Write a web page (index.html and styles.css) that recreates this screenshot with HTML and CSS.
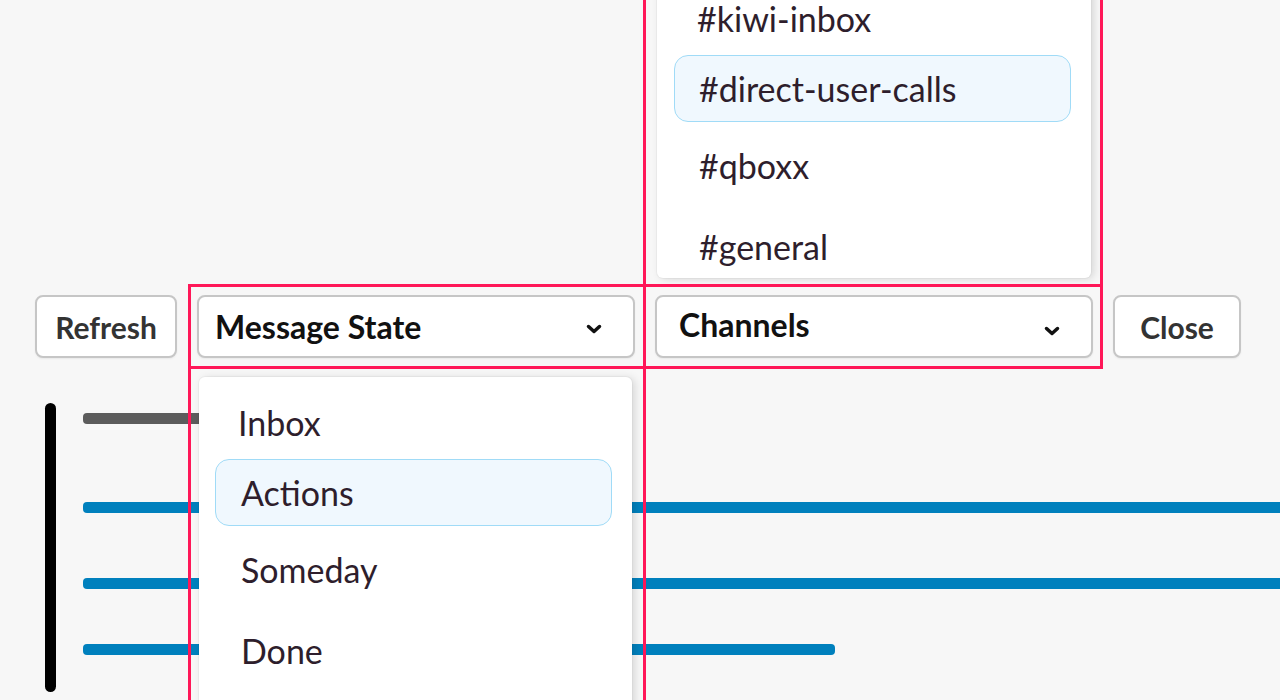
FILE: index.html
```html
<!DOCTYPE html>
<html lang="en">
<head>
  <meta charset="UTF-8">
  <meta name="viewport" content="width=device-width, initial-scale=1">
  <title>Inbox filters</title>
  <link rel="stylesheet" href="styles.css">
</head>
<body>

<div class="app">
  <div class="toolbar">
    <button class="btn btn-refresh">Refresh</button>

    <div class="pick pick-state">
      <button class="select">
        <span>Message State</span>
        <svg class="chev" width="16" height="10" viewBox="0 0 16 10"><polyline points="2.5,2.5 8,7.5 13.5,2.5" /></svg>
      </button>
      <div class="menu menu-down">
        <div class="item first">Inbox</div>
        <div class="item active">Actions</div>
        <div class="item">Someday</div>
        <div class="item">Done</div>
      </div>
    </div>

    <div class="pick pick-channels">
      <button class="select select-up">
        <span>Channels</span>
        <svg class="chev" width="16" height="10" viewBox="0 0 16 10"><polyline points="2.5,2.5 8,7.5 13.5,2.5" /></svg>
      </button>
      <div class="menu menu-up">
        <div class="item first">#kiwi-inbox</div>
        <div class="item active">#direct-user-calls</div>
        <div class="item">#qboxx</div>
        <div class="item">#general</div>
      </div>
    </div>

    <button class="btn btn-close">Close</button>
  </div>

  <div class="feed">
    <div class="rail"></div>
    <div class="bars">
      <div class="bar bar-head"></div>
      <div class="bar bar-line"></div>
      <div class="bar bar-line bar-2"></div>
      <div class="bar bar-line bar-3"></div>
    </div>
  </div>
</div>

</body>
</html>
```

FILE: styles.css
```css
html, body {
  margin: 0;
  height: 100%;
  overflow: hidden;
}
body {
  background: #f7f7f7;
  font-family: Lato, "Open Sans", sans-serif;
  color: #2e1e2c;
}
.app {
  padding-top: 295px;
}
.toolbar {
  display: flex;
  gap: 20px;
  padding-left: 35px;
  position: relative;
  z-index: 2;
}
.btn, .select {
  box-sizing: border-box;
  height: 63px;
  background: #fff;
  border: 2px solid #c6c6c6;
  border-radius: 8px;
  font-family: inherit;
  font-weight: 700;
  font-size: 30px;
  cursor: pointer;
  box-shadow: 0 1px 2px rgba(0,0,0,0.06);
}
.btn {
  color: #333;
  padding: 0;
  text-align: center;
}
.btn-refresh { width: 142px; }
.btn-close { width: 128px; }

.pick {
  position: relative;
  width: 438px;
}
.pick::after {
  content: "";
  position: absolute;
  top: -11px; bottom: -11px;
  border: 3px solid #ff1758;
  pointer-events: none;
  z-index: 5;
}
.pick-state::after { left: -9px; right: -11px; }
.pick-channels::after { left: -12px; right: -10px; }

.select {
  width: 100%;
  display: flex;
  align-items: center;
  justify-content: space-between;
  padding: 0 31px 0 16px;
  color: #111;
  font-size: 32px;
}
.select-up {
  padding-left: 22px;
  padding-bottom: 5px;
}
.chev {
  fill: none;
  stroke: #111;
  stroke-width: 3.5;
  stroke-linecap: round;
  stroke-linejoin: round;
  margin-top: 4px;
}
.select-up .chev { margin-top: 13px; }

.menu {
  position: absolute;
  left: 2px;
  box-sizing: border-box;
  background: #fff;
  border-radius: 6px;
  box-shadow: 3px 1px 9px rgba(0,0,0,0.13), 0 0 0 1px rgba(0,0,0,0.03);
  display: flex;
  flex-direction: column;
}
.menu::after {
  content: "";
  position: absolute;
  border: 3px solid #ff1758;
  pointer-events: none;
}
.menu-down {
  top: calc(100% + 19px);
  width: 433px;
  padding: 12px 20px 40px 16px;
}
.menu-down::after {
  left: -11px; right: -14px; top: -11px; bottom: -11px;
}
.menu-up {
  bottom: calc(100% + 17px);
  width: 434px;
  padding: 12px 20px 0 17px;
}
.menu-up::after {
  left: -14px; right: -12px; top: -11px; bottom: -9px;
}
.item {
  box-sizing: border-box;
  height: 67px;
  display: flex;
  align-items: center;
  padding-left: 25px;
  border: 1px solid transparent;
  border-radius: 14px;
  font-size: 34px;
  color: #2e1e2c;
}
.item.first { padding-left: 22px; }
.menu-up .item { padding-left: 24px; }
.menu-up .item.first { padding-left: 22px; }
.item:nth-child(2) { margin-top: 3px; }
.item:nth-child(3) { margin-top: 10px; }
.item:nth-child(4) { margin-top: 14px; }
.menu-up .item:last-child { margin-bottom: -2px; }
.item.active {
  background: #f0f8fe;
  border-color: #a0dbf7;
}

.feed {
  display: flex;
  margin-top: 45px;
  padding-left: 45px;
}
.rail {
  flex-shrink: 0;
  width: 11px;
  height: 289px;
  background: #000;
  border-radius: 6px;
}
.bars {
  flex-shrink: 0;
  margin-left: 27px;
  padding-top: 10px;
}
.bar {
  height: 11px;
  border-radius: 4px;
}
.bar-head {
  width: 300px;
  background: #5c5c5c;
}
.bar-line {
  width: 1220px;
  background: #0080bd;
  margin-top: 78px;
}
.bar-2 { margin-top: 65px; }
.bar-3 { margin-top: 55px; width: 752px; }
```
